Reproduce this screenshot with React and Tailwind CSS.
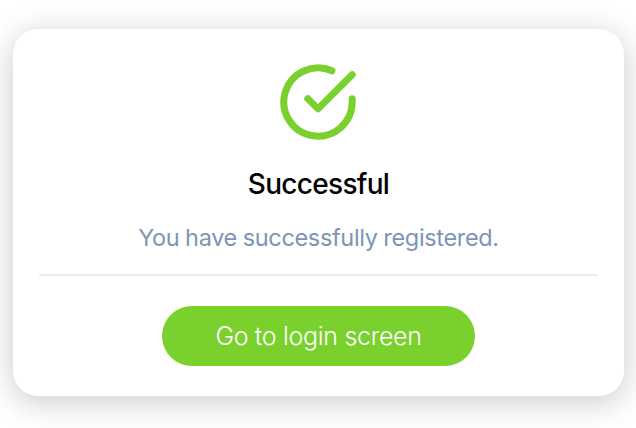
export default function App() {
  return (
    <div className="h-[428px] w-[636px] overflow-hidden bg-white pt-[29px] pl-[13px] font-['Inter',sans-serif]">
      <main className="flex h-[367px] w-[611px] flex-col items-center rounded-[25px] bg-white px-[26px] pt-[31.5px] shadow-[0_6px_32px_rgba(0,0,0,0.21)]">
        <svg
          className="mr-[0.5px] h-[82px] w-[82px] shrink-0 text-[#7ad02d]"
          viewBox="0 0 24 24"
          fill="none"
          stroke="currentColor"
          strokeWidth="2.05"
          strokeLinecap="round"
          strokeLinejoin="round"
          aria-hidden="true"
        >
          <path d="M22 11.08V12a10 10 0 1 1-5.93-9.14" />
          <path d="M22 4 12 14.01l-3-3" />
        </svg>
        <h1 className="mt-[23.5px] text-[28px] leading-9 font-medium tracking-[-0.7px] whitespace-nowrap text-black">
          Successful
        </h1>
        <p className="mt-5 text-[23.5px] leading-8 tracking-[-0.34px] [word-spacing:-0.5px] whitespace-nowrap text-[#7c95b5]">
          You have successfully registered.
        </p>
        <hr className="mt-5 h-0.5 w-[559px] shrink-0 border-0 bg-[#ebebeb]" />
        <button className="mt-[30px] h-[60px] w-[313px] shrink-0 rounded-full bg-[#7ad02d] pt-px text-[25px] font-light tracking-[-0.32px] whitespace-nowrap text-white">
          Go to login screen
        </button>
      </main>
    </div>
  );
}
